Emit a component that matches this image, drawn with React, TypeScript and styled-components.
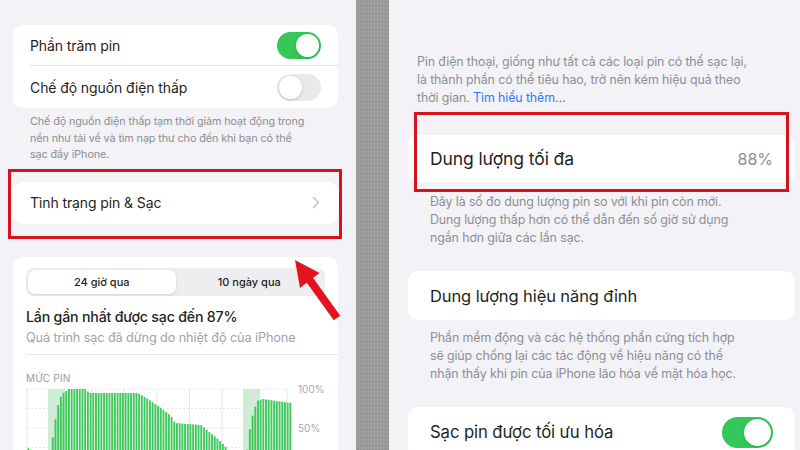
import React from 'react';
import styled, { createGlobalStyle } from 'styled-components';

const GlobalStyle = createGlobalStyle`
  html, body {
    margin: 0;
    padding: 0;
    background: #f2f2f7;
    overflow: hidden;
  }
  body {
    font-family: Inter, "Noto Sans", "Liberation Sans", sans-serif;
    -webkit-font-smoothing: antialiased;
  }
`;

const Screen = styled.div`
  position: relative;
  display: flex;
  width: 800px;
  height: 450px;
  overflow: hidden;
  background: #f2f2f7;
`;

const LeftPanel = styled.div`
  width: 356px;
  flex-shrink: 0;
  display: flex;
  flex-direction: column;
  padding: 25px 18px 0 13px;
  box-sizing: border-box;
  background: #f2f2f7;
`;

const Strip = styled.div`
  width: 33px;
  flex-shrink: 0;
  background-color: #9b9b9b;
  background-image:
    repeating-linear-gradient(90deg, rgba(255, 255, 255, 0.07) 0 1px, transparent 1px 3px),
    repeating-linear-gradient(0deg, rgba(0, 0, 0, 0.06) 0 1px, transparent 1px 4px);
`;

const RightPanel = styled.div`
  flex: 1;
  display: flex;
  flex-direction: column;
  padding: 53px 5px 0 19px;
  box-sizing: border-box;
  background: #f2f2f7;
`;

const Group = styled.div<{ $mt?: number }>`
  background: #ffffff;
  border-radius: 10px;
  margin-top: ${(p) => p.$mt ?? 0}px;
`;

const Row = styled.div<{ $h: number; $pad: number }>`
  display: flex;
  align-items: stretch;
  height: ${(p) => p.$h}px;
  padding-left: ${(p) => p.$pad}px;
`;

const RowBody = styled.div<{ $divider?: boolean; $pad: number }>`
  flex: 1;
  display: flex;
  align-items: center;
  justify-content: space-between;
  padding-right: ${(p) => p.$pad}px;
  border-bottom: ${(p) => (p.$divider ? '1px solid #e3e3e6' : 'none')};
`;

const Label = styled.span<{ $size: number }>`
  font-size: ${(p) => p.$size}px;
  color: #1f1f21;
  letter-spacing: -0.1px;
`;

const Value = styled.span`
  font-size: 16px;
  color: #8e8e93;
`;

const Footnote = styled.div<{ $size: number; $lh: number; $mt: number; $pl: number }>`
  font-size: ${(p) => p.$size}px;
  line-height: ${(p) => p.$lh}px;
  margin-top: ${(p) => p.$mt}px;
  padding-left: ${(p) => p.$pl}px;
  color: #8e8e93;
  letter-spacing: -0.1px;
  white-space: nowrap;
`;

const Link = styled.span`
  color: #3478f6;
`;

const Track = styled.div<{ $on: boolean; $w: number; $h: number }>`
  width: ${(p) => p.$w}px;
  height: ${(p) => p.$h}px;
  border-radius: ${(p) => p.$h / 2}px;
  background: ${(p) => (p.$on ? '#34c759' : '#e9e9eb')};
  display: flex;
  align-items: center;
  justify-content: ${(p) => (p.$on ? 'flex-end' : 'flex-start')};
  padding: 2px;
  box-sizing: border-box;
`;

const Knob = styled.div<{ $d: number }>`
  width: ${(p) => p.$d}px;
  height: ${(p) => p.$d}px;
  border-radius: 50%;
  background: #ffffff;
  box-shadow: 0 1px 3px rgba(0, 0, 0, 0.18);
`;

const Highlight = styled.div<{ $mt: number }>`
  position: relative;
  margin-top: ${(p) => p.$mt}px;
`;

const RedBox = styled.div<{ $t: number; $r: number; $b: number; $l: number }>`
  position: absolute;
  top: ${(p) => p.$t}px;
  right: ${(p) => p.$r}px;
  bottom: ${(p) => p.$b}px;
  left: ${(p) => p.$l}px;
  border: 3px solid #d7121c;
  pointer-events: none;
`;

const ChartCard = styled.div`
  background: #ffffff;
  border-radius: 10px;
  margin-top: 33px;
  padding: 11px 0 0 13px;
  display: flex;
  flex-direction: column;
  flex: 1;
`;

const Segmented = styled.div`
  display: grid;
  grid-template-columns: 1fr 1fr;
  width: 299px;
  height: 28px;
  padding: 2px;
  box-sizing: border-box;
  border-radius: 8px;
  background: #eeeef0;
`;

const Segment = styled.div<{ $active?: boolean }>`
  display: flex;
  align-items: center;
  justify-content: center;
  border-radius: 7px;
  font-size: 11px;
  font-weight: 500;
  color: #1f1f21;
  background: ${(p) => (p.$active ? '#ffffff' : 'transparent')};
  box-shadow: ${(p) => (p.$active ? '0 1px 3px rgba(0,0,0,0.12)' : 'none')};
`;

const ChartTitle = styled.div`
  margin-top: 12px;
  font-size: 14.2px;
  line-height: 18px;
  font-weight: 500;
  color: #1f1f21;
  letter-spacing: -0.2px;
`;

const ChartSub = styled.div`
  margin-top: 3px;
  font-size: 12.7px;
  line-height: 18px;
  color: #a2a2a7;
  letter-spacing: -0.1px;
`;

const Divider = styled.div`
  margin-top: 7px;
  height: 1px;
  background: #e6e6e9;
`;

const Caption = styled.div`
  margin-top: 16px;
  font-size: 10px;
  line-height: 14px;
  color: #9a9a9f;
  letter-spacing: 0.2px;
`;

const ChartSvg = styled.svg`
  display: block;
  margin-top: -4px;
`;

const ArrowSvg = styled.svg`
  position: absolute;
  left: 280px;
  top: 250px;
  width: 70px;
  height: 80px;
  pointer-events: none;
`;

function Toggle({ on, w = 44, h = 27 }: { on: boolean; w?: number; h?: number }) {
  return (
    <Track $on={on} $w={w} $h={h}>
      <Knob $d={h - 4} />
    </Track>
  );
}

function Chevron() {
  return (
    <svg width="8" height="13" viewBox="0 0 8 13">
      <path d="M1.5 1.5 L6.5 6.5 L1.5 11.5" fill="none" stroke="#c4c4c8" strokeWidth="1.6" strokeLinecap="round" strokeLinejoin="round" />
    </svg>
  );
}

// battery level outline, page x -> page y of bar top
const profile: [number, number][] = [
  [27, 447], [48, 458], [49, 456], [52, 435], [55, 415], [58, 400], [61, 393], [65, 390],
  [68, 388], [85, 388], [88, 392], [137, 392], [147, 398], [160, 407], [170, 415], [174, 422],
  [200, 424], [207, 430], [217, 438], [227, 448], [230, 458], [244, 460], [246, 450],
  [250, 420], [256, 400], [262, 398], [290, 402], [292, 402],
];

function topAt(x: number) {
  for (let i = 0; i < profile.length - 1; i++) {
    const [x0, y0] = profile[i];
    const [x1, y1] = profile[i + 1];
    if (x >= x0 && x <= x1) return y0 + ((y1 - y0) * (x - x0)) / (x1 - x0 || 1);
  }
  return 466;
}

function BatteryChart() {
  const ox = 26;
  const oy = 380;
  const bars: React.ReactNode[] = [];
  for (let x = 27.5; x < 292; x += 2.7) {
    const y = topAt(x);
    bars.push(<rect key={x} x={x - ox} y={y - oy} width={1.9} height={466 - y} fill="#3fc95c" />);
  }
  const vLines = [0, 1, 2, 3, 4, 5, 6, 7, 8].map((i) => 27 + i * 32.5);
  const hLines = [388, 407.5, 427, 446.5];
  return (
    <ChartSvg width={310} height={86} viewBox="0 0 310 86">
      <rect x={48 - ox} y={388 - oy} width={17} height={80} fill="#cdeed5" />
      <rect x={243 - ox} y={388 - oy} width={17} height={80} fill="#cdeed5" />
      {vLines.map((x) => (
        <line key={x} x1={x - ox} x2={x - ox} y1={388 - oy} y2={86} stroke="#e6e6ea" strokeWidth={1} />
      ))}
      {hLines.map((y) => (
        <line key={y} x1={27 - ox} x2={287 - ox} y1={y - oy} y2={y - oy} stroke="#e6e6ea" strokeWidth={1} strokeDasharray="2 2" />
      ))}
      {bars}
      <text x={298 - ox} y={392 - oy} fontSize={10} fill="#a8a8ad" fontFamily="Inter, sans-serif">100%</text>
      <text x={298 - ox} y={431 - oy} fontSize={10} fill="#a8a8ad" fontFamily="Inter, sans-serif">50%</text>
    </ChartSvg>
  );
}

function Arrow() {
  return (
    <ArrowSvg viewBox="0 0 70 80">
      <line x1={29} y1={29} x2={57} y2={68} stroke="#e3141d" strokeWidth={8} strokeLinecap="butt" />
      <polygon points="15,10 39.5,23 20,38" fill="#e3141d" />
    </ArrowSvg>
  );
}

export default function App() {
  return (
    <>
      <GlobalStyle />
      <Screen>
        <LeftPanel>
          <Group>
            <Row $h={41} $pad={17}>
              <RowBody $divider $pad={17}>
                <Label $size={14}>Phần trăm pin</Label>
                <Toggle on />
              </RowBody>
            </Row>
            <Row $h={42} $pad={17}>
              <RowBody $pad={17}>
                <Label $size={14}>Chế độ nguồn điện thấp</Label>
                <Toggle on={false} />
              </RowBody>
            </Row>
          </Group>
          <Footnote $size={10.8} $lh={16.5} $mt={6} $pl={17}>
            Chế độ nguồn điện thấp tạm thời giảm hoạt động trong
            <br />
            nền như tải về và tìm nạp thư cho đến khi bạn có thể
            <br />
            sạc đầy iPhone.
          </Footnote>
          <Highlight $mt={18}>
            <Group>
              <Row $h={42} $pad={17}>
                <RowBody $pad={18}>
                  <Label $size={14}>Tình trạng pin &amp; Sạc</Label>
                  <Chevron />
                </RowBody>
              </Row>
            </Group>
            <RedBox $t={-13} $r={-4} $b={-15} $l={-5} />
          </Highlight>
          <ChartCard>
            <Segmented>
              <Segment $active>24 giờ qua</Segment>
              <Segment>10 ngày qua</Segment>
            </Segmented>
            <ChartTitle>Lần gần nhất được sạc đến 87%</ChartTitle>
            <ChartSub>Quá trình sạc đã dừng do nhiệt độ của iPhone</ChartSub>
            <Divider />
            <Caption>MỨC PIN</Caption>
            <BatteryChart />
          </ChartCard>
        </LeftPanel>
        <Strip />
        <RightPanel>
          <Footnote $size={12.4} $lh={18} $mt={0} $pl={9}>
            Pin điện thoại, giống như tất cả các loại pin có thể sạc lại,
            <br />
            là thành phần có thể tiêu hao, trở nên kém hiệu quả theo
            <br />
            thời gian. <Link>Tìm hiểu thêm...</Link>
          </Footnote>
          <Highlight $mt={28}>
            <Group>
              <Row $h={47} $pad={22}>
                <RowBody $pad={22}>
                  <Label $size={17.5}>Dung lượng tối đa</Label>
                  <Value>88%</Value>
                </RowBody>
              </Row>
            </Group>
            <RedBox $t={-23} $r={6} $b={-10} $l={6} />
          </Highlight>
          <Footnote $size={12.4} $lh={18} $mt={11} $pl={22}>
            Đây là số đo dung lượng pin so với khi pin còn mới.
            <br />
            Dung lượng thấp hơn có thể dẫn đến số giờ sử dụng
            <br />
            ngắn hơn giữa các lần sạc.
          </Footnote>
          <Group $mt={24}>
            <Row $h={49} $pad={22}>
              <RowBody $pad={22}>
                <Label $size={16.5}>Dung lượng hiệu năng đỉnh</Label>
              </RowBody>
            </Row>
          </Group>
          <Footnote $size={12.4} $lh={18} $mt={9} $pl={22}>
            Phần mềm động và các hệ thống phần cứng tích hợp
            <br />
            sẽ giúp chống lại các tác động về hiệu năng có thể
            <br />
            nhận thấy khi pin của iPhone lão hóa về mặt hóa học.
          </Footnote>
          <Group $mt={24}>
            <Row $h={50} $pad={22}>
              <RowBody $pad={22}>
                <Label $size={16.7}>Sạc pin được tối ưu hóa</Label>
                <Toggle on w={51} h={31} />
              </RowBody>
            </Row>
          </Group>
        </RightPanel>
        <Arrow />
      </Screen>
    </>
  );
}
